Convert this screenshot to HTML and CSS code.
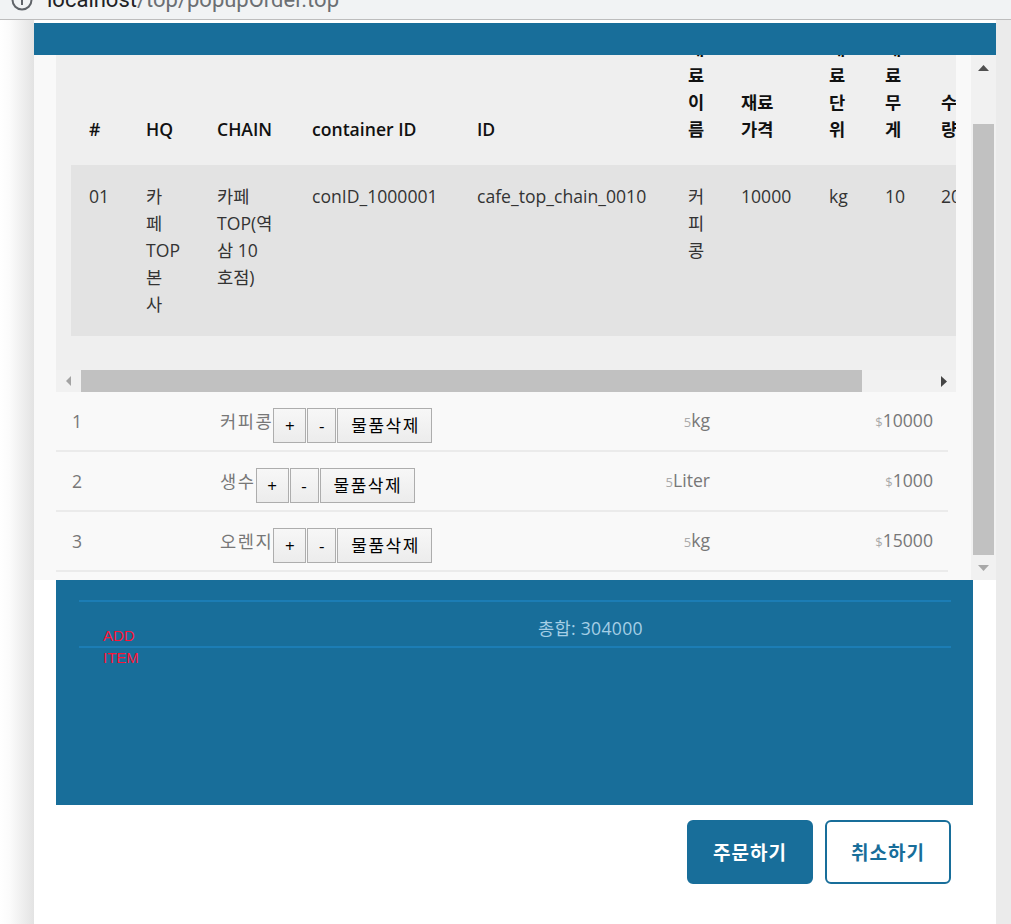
FILE: index.html
```html
<!DOCTYPE html>
<html lang="ko">
<head>
<meta charset="utf-8">
<title>popupOrder</title>
<link rel="stylesheet" href="styles.css">
</head>
<body>
<div class="chrome">
  <div class="urlline">
    <svg class="info" width="22" height="22" viewBox="0 0 22 22"><circle cx="11" cy="11" r="9.5" fill="none" stroke="#5f6368" stroke-width="2"/><rect x="10" y="9.5" width="2" height="6.5" fill="#5f6368"/><rect x="10" y="5.5" width="2" height="2" fill="#5f6368"/></svg>
    <span class="host">localhost</span><span class="path">/top/popupOrder.top</span>
  </div>
</div>
<div class="page">
  <div class="shade"></div>
  <div class="panel">
    <div class="topbar"></div>
    <div class="scroller">
      <div class="scroll-content">
        <div class="grid-area">
          <div class="grid-clip">
            <table class="grid">
              <colgroup>
                <col class="c1"><col class="c2"><col class="c3"><col class="c4"><col class="c5"><col class="c6"><col class="c7"><col class="c8"><col class="c9"><col class="c10">
              </colgroup>
              <thead>
                <tr>
                  <th>#</th>
                  <th>HQ</th>
                  <th>CHAIN</th>
                  <th>container ID</th>
                  <th>ID</th>
                  <th>재<br>료<br>이<br>름</th>
                  <th>재료<br>가격</th>
                  <th>재<br>료<br>단<br>위</th>
                  <th>재<br>료<br>무<br>게</th>
                  <th>수<br>량</th>
                </tr>
              </thead>
              <tbody>
                <tr>
                  <td>01</td>
                  <td>카<br>페<br>TOP<br>본<br>사</td>
                  <td>카페<br>TOP(역<br>삼 10<br>호점)</td>
                  <td>conID_1000001</td>
                  <td>cafe_top_chain_0010</td>
                  <td>커<br>피<br>콩</td>
                  <td>10000</td>
                  <td>kg</td>
                  <td>10</td>
                  <td>200</td>
                </tr>
              </tbody>
            </table>
          </div>
          <div class="hbar">
            <div class="arrow-box">
              <svg width="6" height="10" viewBox="0 0 6 10"><polygon points="5,0 5,10 0,5" fill="#a3a3a3"/></svg>
            </div>
            <div class="hthumb"></div>
            <div class="hspace"></div>
            <div class="arrow-box">
              <svg width="6" height="11" viewBox="0 0 6 11"><polygon points="0,0 0,11 6,5.5" fill="#454545"/></svg>
            </div>
          </div>
        </div>
        <div class="items">
          <div class="item">
            <span class="num">1</span>
            <div class="name"><span class="label">커피콩</span><div class="btns"><button class="qbtn plus">+</button><button class="qbtn minus">-</button><button class="qbtn del">물품삭제</button></div></div>
            <span class="unit"><small>5</small>kg</span>
            <span class="price"><small>$</small>10000</span>
          </div>
          <div class="item">
            <span class="num">2</span>
            <div class="name"><span class="label">생수</span><div class="btns"><button class="qbtn plus">+</button><button class="qbtn minus">-</button><button class="qbtn del">물품삭제</button></div></div>
            <span class="unit"><small>5</small>Liter</span>
            <span class="price"><small>$</small>1000</span>
          </div>
          <div class="item">
            <span class="num">3</span>
            <div class="name"><span class="label">오렌지</span><div class="btns"><button class="qbtn plus">+</button><button class="qbtn minus">-</button><button class="qbtn del">물품삭제</button></div></div>
            <span class="unit"><small>5</small>kg</span>
            <span class="price"><small>$</small>15000</span>
          </div>
        </div>
      </div>
      <div class="vbar">
        <div class="varrow">
          <svg width="11" height="6" viewBox="0 0 11 6"><polygon points="0,6 11,6 5.5,0" fill="#505050"/></svg>
        </div>
        <div class="vthumb"></div>
        <div class="varrow">
          <svg width="11" height="6" viewBox="0 0 11 6"><polygon points="0,0 11,0 5.5,6" fill="#a8a8a8"/></svg>
        </div>
      </div>
    </div>
    <div class="summary">
      <div class="sum-row">
        <span class="add-item">ADD ITEM</span>
        <span class="total">총합: 304000</span>
      </div>
    </div>
    <div class="actions">
      <button class="act primary">주문하기</button>
      <button class="act outline">취소하기</button>
    </div>
  </div>
  <div class="rside"></div>
</div>
</body>
</html>
```

FILE: styles.css
```css
* { box-sizing: border-box; }
html, body { margin: 0; padding: 0; }
body {
  width: 1011px;
  height: 924px;
  overflow: hidden;
  background: #fff;
  font-family: "Open Sans", "Noto Sans CJK KR", sans-serif;
}

/* browser chrome remnant */
.chrome {
  height: 20px;
  background: #f1f3f4;
  border-bottom: 1px solid #bdbdbd;
  overflow: hidden;
}
.urlline {
  display: flex;
  align-items: flex-start;
  margin-top: -10px;
  padding-left: 11px;
  height: 30px;
  line-height: 20px;
  font-family: Roboto, "Noto Sans", sans-serif;
  font-size: 22px;
  white-space: nowrap;
}
.info { flex: none; margin-top: -1.5px; margin-right: 14px; }
.host { color: #202124; }
.path { color: #6b6f73; }

/* page frame */
.page { display: flex; height: 904px; }
.shade {
  width: 34px;
  flex: none;
  background: linear-gradient(90deg, #ffffff 0, #fbfbfb 10px, #e3e3e3 34px);
}
.panel { width: 962px; flex: none; background: #fff; padding-top: 3px; }
.rside { flex: 1; background: #ebebeb; }
.topbar { height: 32px; background: #186e9a; }

/* scroll area */
.scroller { display: flex; height: 525px; }
.scroll-content { flex: 1; min-width: 0; background: #f9f9f9; overflow: hidden; }
.grid-area { margin-left: 22px; width: 900px; background: #efefef; }
.grid-clip { height: 315px; overflow: hidden; padding-left: 15px; }

.grid {
  margin-top: -38px;
  border-collapse: collapse;
  table-layout: fixed;
  width: 963px;
  font-size: 17.6px;
  line-height: 27px;
}
.c1 { width: 57px; }
.c2 { width: 71px; }
.c3 { width: 95px; }
.c4 { width: 165px; }
.c5 { width: 211px; }
.c6 { width: 53px; }
.c7 { width: 88px; }
.c8 { width: 56px; }
.c9 { width: 56px; }
.c10 { width: 111px; }
.grid th {
  padding: 18px 18px 22px;
  text-align: left;
  vertical-align: bottom;
  font-weight: 600;
  color: #111;
  white-space: nowrap;
}
.grid td {
  padding: 18px;
  vertical-align: top;
  color: #333;
  background: #e3e3e3;
  white-space: nowrap;
}

.hbar { height: 22px; display: flex; background: #f1f1f1; }
.arrow-box { width: 25px; flex: none; display: flex; align-items: center; justify-content: center; }
.hthumb { width: 781px; flex: none; background: #c1c1c1; }
.hspace { flex: 1; }

/* item rows */
.items { margin-left: 22px; width: 892px; }
.item {
  display: grid;
  grid-template-columns: 148px 1fr 150px 223px;
  align-items: center;
  height: 60px;
  border-bottom: 2px solid #ebebeb;
  padding: 0 15px 0 16px;
  color: #777;
  font-size: 17.6px;
  line-height: 27px;
}
.name { display: flex; align-items: center; }
.label { letter-spacing: 1.6px; }
.btns { display: flex; gap: 1px; margin-top: 9px; }
.qbtn {
  height: 35px;
  padding: 0;
  border: 1px solid #adadad;
  border-radius: 0;
  background: linear-gradient(#f7f7f7, #ececec);
  color: #000;
  font-family: "Open Sans", "Noto Sans CJK KR", sans-serif;
  font-size: 17px;
  line-height: 33px;
}
.plus { width: 33px; }
.minus { width: 29px; }
.del { width: 95px; letter-spacing: 1.5px; text-indent: 1.5px; }
.unit, .price { text-align: right; }
.item small { font-size: 13px; color: #aaa; }

/* vertical scrollbar */
.vbar { width: 25px; flex: none; background: #f1f1f1; display: flex; flex-direction: column; }
.varrow { height: 25px; flex: none; display: flex; align-items: center; justify-content: center; }
.vthumb { margin: 44px 2px 0; height: 431px; background: #c1c1c1; }

/* summary */
.summary {
  margin-left: 22px;
  width: 917px;
  height: 225px;
  background: #186e9a;
  padding: 20px 22px 0 23px;
}
.sum-row {
  display: flex;
  align-items: flex-start;
  height: 48px;
  border-top: 2px solid #1c7db5;
  border-bottom: 2px solid #1c7db5;
}
.add-item {
  width: 45px;
  margin-left: 24px;
  padding-top: 23px;
  font-family: "Liberation Sans", sans-serif;
  font-size: 15px;
  line-height: 22px;
  color: #ff1436;
}
.total {
  margin-left: 390px;
  margin-top: 13px;
  font-size: 17.6px;
  line-height: 27px;
  color: #a5cfe6;
  letter-spacing: 0.3px;
}

/* action buttons */
.actions { display: flex; justify-content: flex-end; gap: 12px; padding: 15px 45px 0 0; }
.act {
  width: 126px;
  height: 64px;
  border-radius: 6px;
  font-family: "Open Sans", "Noto Sans CJK KR", sans-serif;
  font-size: 19px;
  font-weight: 700;
  letter-spacing: 1px;
}
.primary { background: #186e9a; border: 2px solid #186e9a; color: #fff; }
.outline { background: #fff; border: 2px solid #186e9a; color: #186e9a; }
```
